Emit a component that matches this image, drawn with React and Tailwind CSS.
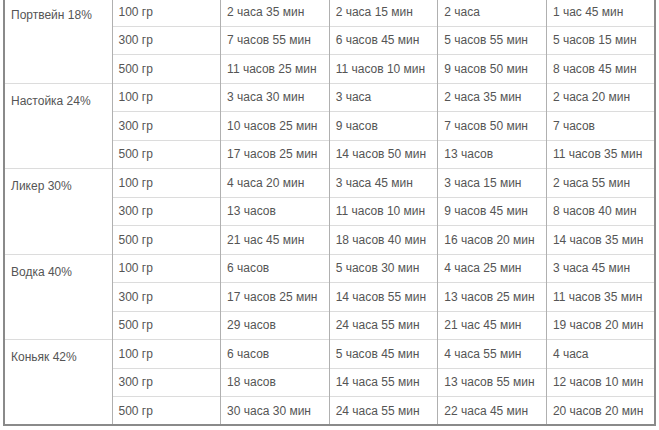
const data = [
	{
		name: "Портвейн 18%",
		rows: [
			["100 гр", "2 часа 35 мин", "2 часа 15 мин", "2 часа", "1 час 45 мин"],
			["300 гр", "7 часов 55 мин", "6 часов 45 мин", "5 часов 55 мин", "5 часов 15 мин"],
			["500 гр", "11 часов 25 мин", "11 часов 10 мин", "9 часов 50 мин", "8 часов 45 мин"],
		],
	},
	{
		name: "Настойка 24%",
		rows: [
			["100 гр", "3 часа 30 мин", "3 часа", "2 часа 35 мин", "2 часа 20 мин"],
			["300 гр", "10 часов 25 мин", "9 часов", "7 часов 50 мин", "7 часов"],
			["500 гр", "17 часов 25 мин", "14 часов 50 мин", "13 часов", "11 часов 35 мин"],
		],
	},
	{
		name: "Ликер 30%",
		rows: [
			["100 гр", "4 часа 20 мин", "3 часа 45 мин", "3 часа 15 мин", "2 часа 55 мин"],
			["300 гр", "13 часов", "11 часов 10 мин", "9 часов 45 мин", "8 часов 40 мин"],
			["500 гр", "21 час 45 мин", "18 часов 40 мин", "16 часов 20 мин", "14 часов 35 мин"],
		],
	},
	{
		name: "Водка 40%",
		rows: [
			["100 гр", "6 часов", "5 часов 30 мин", "4 часа 25 мин", "3 часа 45 мин"],
			["300 гр", "17 часов 25 мин", "14 часов 55 мин", "13 часов 25 мин", "11 часов 35 мин"],
			["500 гр", "29 часов", "24 часа 55 мин", "21 час 45 мин", "19 часов 20 мин"],
		],
	},
	{
		name: "Коньяк 42%",
		rows: [
			["100 гр", "6 часов", "5 часов 45 мин", "4 часа 55 мин", "4 часа"],
			["300 гр", "18 часов", "14 часа 55 мин", "13 часов 55 мин", "12 часов 10 мин"],
			["500 гр", "30 часа 30 мин", "24 часа 55 мин", "22 часа 45 мин", "20 часов 20 мин"],
		],
	},
];

export default function App() {
	return (
		<div className="w-[659px] h-[430px] overflow-hidden bg-white pl-[3px] font-['Liberation_Sans',Arial,sans-serif] text-[12px] text-[#555]">
			<table className="-mt-[3px] w-[653px] table-fixed border-collapse border-l-2 border-r-2 border-b-2 border-[#8a8a8a]">
				<tbody>
					{data.map((group) =>
						group.rows.map((row, i) => (
							<tr key={group.name + i} className="h-[28.5px]">
								{i === 0 && (
									<td
										rowSpan={3}
										className="w-[108px] align-top pl-[6px] pt-[8px] border-t border-t-[#dcdcdc] border-r border-r-[#b0b0b0]">
										{group.name}
									</td>
								)}
								{row.map((cell, j) => (
									<td
										key={j}
										className="pl-[6px] align-middle whitespace-nowrap border-t border-t-[#dcdcdc] border-r border-r-[#b0b0b0]">
										{cell}
									</td>
								))}
							</tr>
						)),
					)}
				</tbody>
			</table>
		</div>
	);
}
